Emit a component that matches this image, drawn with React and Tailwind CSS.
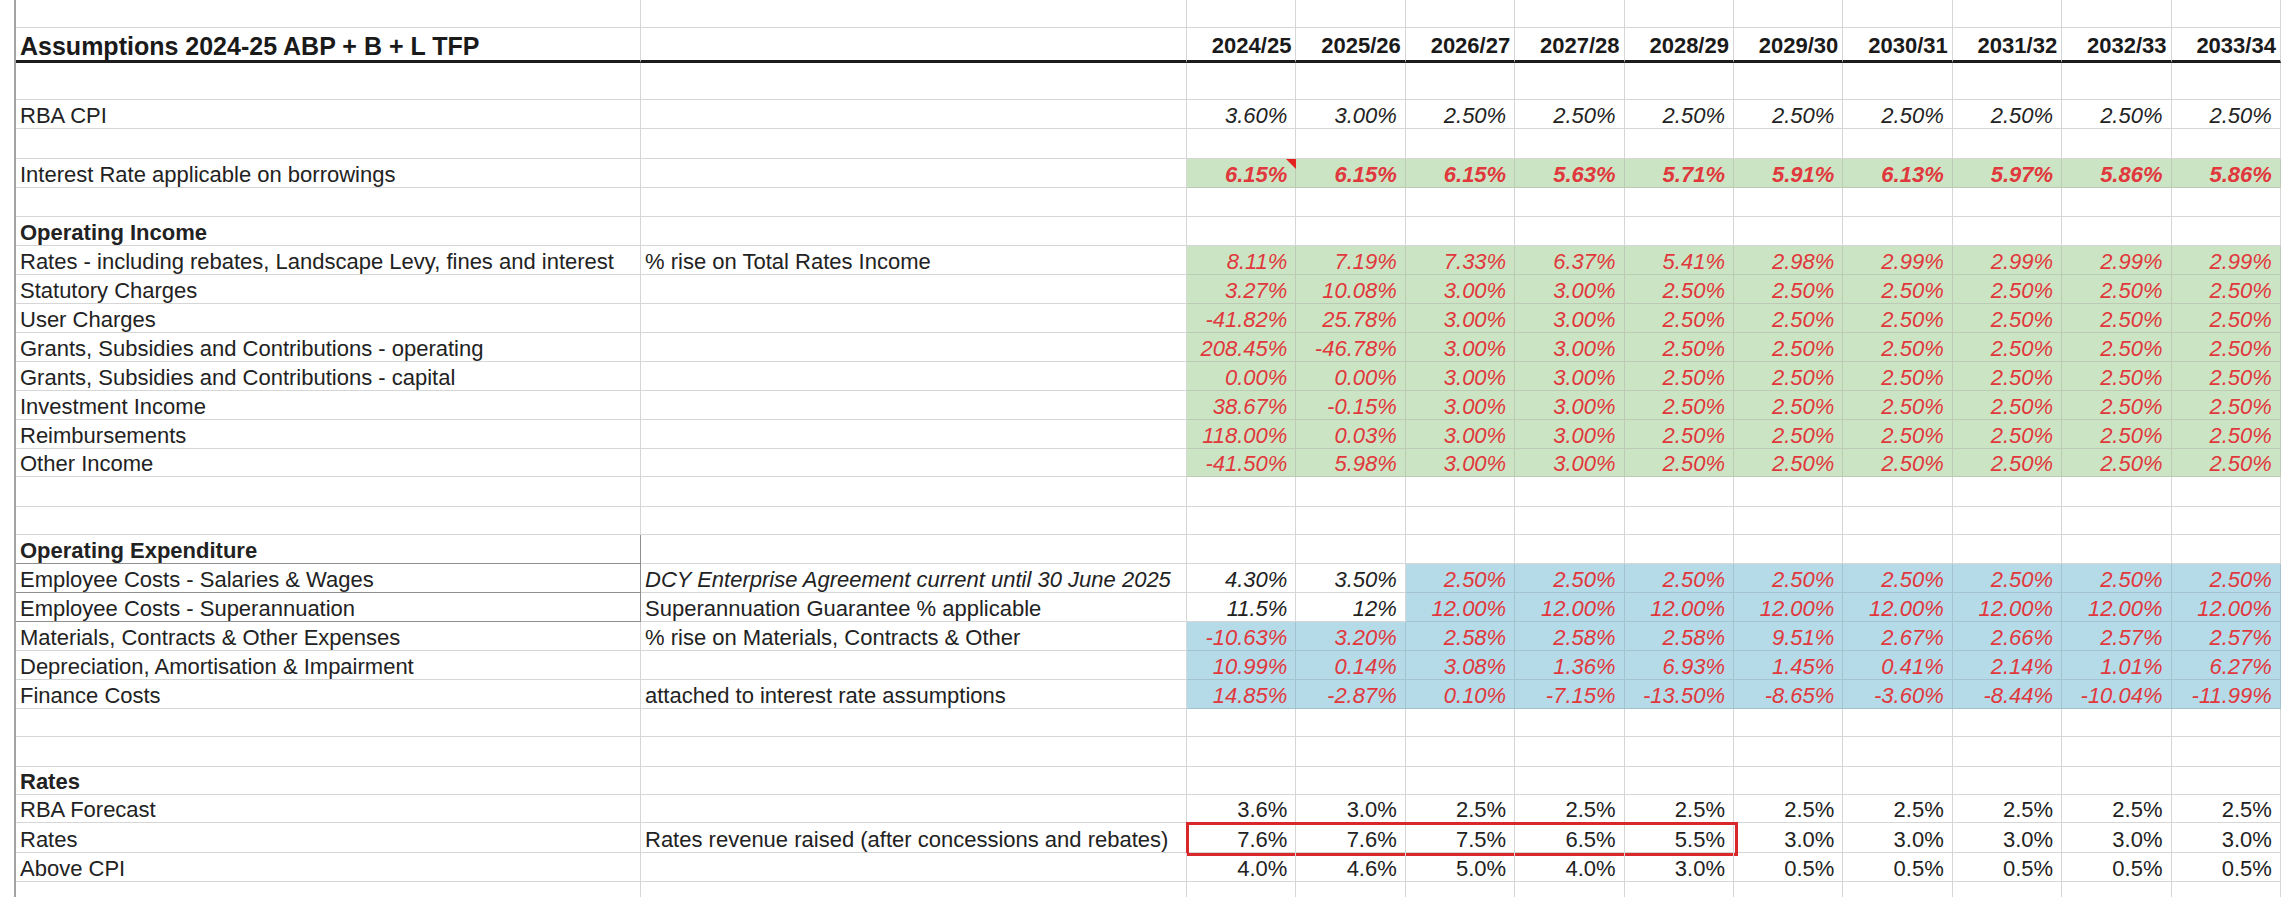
import React from 'react';

const YEARS = ['2024/25', '2025/26', '2026/27', '2027/28', '2028/29', '2029/30', '2030/31', '2031/32', '2032/33', '2033/34'];

const GRID = 'relative grid grid-cols-[16px_625px_546px_repeat(10,109.4px)] w-[2281px]';

const FILL = {
  g: 'bg-[#cbe5c4] border-[#bccab6]',
  b: 'bg-[#b5dbe8] border-[#a3c4cf]',
  w: 'border-[#d6d6d6]',
};

const TEXT = {
  red: 'text-[#e0383c] italic',
  redb: 'text-[#e0383c] italic font-bold',
  dark: 'text-[#222] italic',
  plain: 'text-[#222] pr-[5px]',
};

const mk = (vals, f, t) => vals.map((v) => ({ v, f, t }));

function Row({ h, a, b, aCls = '', bCls = '', cells, aLine = 'border-[#d6d6d6]', noBottom, children }) {
  const bb = noBottom ? '' : 'border-b';
  return (
    <div className={`${GRID} ${h}`}>
      <div className="border-r-2 border-[#a3a3a3]" />
      <div className={`flex items-end pl-[4px] pb-[1px] whitespace-nowrap border-r ${bb} ${aLine} ${aCls}`}>{a}</div>
      <div className={`flex items-end pl-[4px] pb-[1px] whitespace-nowrap border-r ${bb} border-[#d6d6d6] ${bCls}`}>{b}</div>
      {YEARS.map((y, i) => {
        const c = cells ? cells[i] : null;
        const f = c ? FILL[c.f] : FILL.w;
        const t = c ? TEXT[c.t] : '';
        return (
          <div key={y} className={`flex items-end justify-end pr-[8px] pb-[1px] whitespace-nowrap border-r ${bb} ${f} ${t}`}>
            {c ? c.v : ''}
          </div>
        );
      })}
      {children}
    </div>
  );
}

const income = [
  ['Rates - including rebates, Landscape Levy, fines and interest', '% rise on Total Rates Income', ['8.11%', '7.19%', '7.33%', '6.37%', '5.41%', '2.98%', '2.99%', '2.99%', '2.99%', '2.99%'], 'h-[29px]'],
  ['Statutory Charges', '', ['3.27%', '10.08%', '3.00%', '3.00%', '2.50%', '2.50%', '2.50%', '2.50%', '2.50%', '2.50%'], 'h-[29px]'],
  ['User Charges', '', ['-41.82%', '25.78%', '3.00%', '3.00%', '2.50%', '2.50%', '2.50%', '2.50%', '2.50%', '2.50%'], 'h-[29px]'],
  ['Grants, Subsidies and Contributions - operating', '', ['208.45%', '-46.78%', '3.00%', '3.00%', '2.50%', '2.50%', '2.50%', '2.50%', '2.50%', '2.50%'], 'h-[29px]'],
  ['Grants, Subsidies and Contributions - capital', '', ['0.00%', '0.00%', '3.00%', '3.00%', '2.50%', '2.50%', '2.50%', '2.50%', '2.50%', '2.50%'], 'h-[29px]'],
  ['Investment Income', '', ['38.67%', '-0.15%', '3.00%', '3.00%', '2.50%', '2.50%', '2.50%', '2.50%', '2.50%', '2.50%'], 'h-[29px]'],
  ['Reimbursements', '', ['118.00%', '0.03%', '3.00%', '3.00%', '2.50%', '2.50%', '2.50%', '2.50%', '2.50%', '2.50%'], 'h-[29px]'],
  ['Other Income', '', ['-41.50%', '5.98%', '3.00%', '3.00%', '2.50%', '2.50%', '2.50%', '2.50%', '2.50%', '2.50%'], 'h-[28px]'],
];

const salaries = [
  { v: '4.30%', f: 'w', t: 'dark' },
  { v: '3.50%', f: 'w', t: 'dark' },
  ...mk(Array(8).fill('2.50%'), 'b', 'red'),
];

const superann = [
  { v: '11.5%', f: 'w', t: 'dark' },
  { v: '12%', f: 'w', t: 'dark' },
  ...mk(Array(8).fill('12.00%'), 'b', 'red'),
];

const DARKLINE = 'border-[#8f8f8f]';

export default function App() {
  return (
    <div className="w-[2294px] h-[909px] overflow-hidden bg-white font-['Liberation_Sans',Arial,sans-serif] text-[22px] leading-[22px] text-[#222]">
      <Row h="h-[28px]" />

      {/* title row */}
      <div className={`${GRID} h-[35px]`}>
        <div className="border-r-2 border-[#a3a3a3]" />
        <div className="flex items-end pl-[4px] pb-[3px] whitespace-nowrap border-r border-r-[#d6d6d6] border-b-[3px] border-b-[#1c1c1c] text-[25px] font-bold text-[#1a1a1a]">
          Assumptions 2024-25 ABP + B + L TFP
        </div>
        <div className="border-r border-r-[#d6d6d6] border-b-[3px] border-b-[#1c1c1c]" />
        {YEARS.map((y) => (
          <div key={y} className="flex items-end justify-end pr-[4px] pb-[3px] border-r border-r-[#d6d6d6] border-b-[3px] border-b-[#1c1c1c] font-bold text-[#1a1a1a]">
            {y}
          </div>
        ))}
      </div>

      <Row h="h-[37px]" />
      <Row h="h-[29px]" a="RBA CPI" cells={mk(['3.60%', '3.00%', '2.50%', '2.50%', '2.50%', '2.50%', '2.50%', '2.50%', '2.50%', '2.50%'], 'w', 'dark')} />
      <Row h="h-[30px]" />
      <Row
        h="h-[29px]"
        a="Interest Rate applicable on borrowings"
        cells={mk(['6.15%', '6.15%', '6.15%', '5.63%', '5.71%', '5.91%', '6.13%', '5.97%', '5.86%', '5.86%'], 'g', 'redb')}
      >
        {/* comment marker */}
        <div className="absolute left-[1286px] top-0 w-0 h-0 border-t-[10px] border-l-[10px] border-t-[#e3211f] border-l-transparent" />
      </Row>
      <Row h="h-[29px]" />

      <Row h="h-[29px]" a="Operating Income" aCls="font-bold" />
      {income.map(([a, b, vals, h]) => (
        <Row key={a} h={h} a={a} b={b} cells={mk(vals, 'g', 'red')} />
      ))}

      <Row h="h-[30px]" />
      <Row h="h-[28px]" />

      <Row h="h-[29px]" a="Operating Expenditure" aCls="font-bold" aLine={DARKLINE} />
      <Row h="h-[29px]" a="Employee Costs - Salaries & Wages" b="DCY Enterprise Agreement current until 30 June 2025" bCls="italic" aLine={DARKLINE} cells={salaries} />
      <Row h="h-[29px]" a="Employee Costs - Superannuation" b="Superannuation Guarantee % applicable" aLine={DARKLINE} cells={superann} />
      <Row
        h="h-[29px]"
        a="Materials, Contracts & Other Expenses"
        b="% rise on Materials, Contracts & Other"
        cells={mk(['-10.63%', '3.20%', '2.58%', '2.58%', '2.58%', '9.51%', '2.67%', '2.66%', '2.57%', '2.57%'], 'b', 'red')}
      />
      <Row
        h="h-[29px]"
        a="Depreciation, Amortisation & Impairment"
        cells={mk(['10.99%', '0.14%', '3.08%', '1.36%', '6.93%', '1.45%', '0.41%', '2.14%', '1.01%', '6.27%'], 'b', 'red')}
      />
      <Row
        h="h-[29px]"
        a="Finance Costs"
        b="attached to interest rate assumptions"
        cells={mk(['14.85%', '-2.87%', '0.10%', '-7.15%', '-13.50%', '-8.65%', '-3.60%', '-8.44%', '-10.04%', '-11.99%'], 'b', 'red')}
      />

      <Row h="h-[28px]" />
      <Row h="h-[30px]" />

      <Row h="h-[28px]" a="Rates" aCls="font-bold" />
      <Row h="h-[28px]" a="RBA Forecast" cells={mk(['3.6%', '3.0%', '2.5%', '2.5%', '2.5%', '2.5%', '2.5%', '2.5%', '2.5%', '2.5%'], 'w', 'plain')} />
      <Row
        h="h-[30px]"
        a="Rates"
        b="Rates revenue raised (after concessions and rebates)"
        cells={mk(['7.6%', '7.6%', '7.5%', '6.5%', '5.5%', '3.0%', '3.0%', '3.0%', '3.0%', '3.0%'], 'w', 'plain')}
      >
        {/* highlight box */}
        <div className="absolute left-[1186px] top-[-1px] w-[552px] h-[34px] border-[3px] border-[#d9282c]" />
      </Row>
      <Row h="h-[29px]" a="Above CPI" cells={mk(['4.0%', '4.6%', '5.0%', '4.0%', '3.0%', '0.5%', '0.5%', '0.5%', '0.5%', '0.5%'], 'w', 'plain')} />
      <Row h="h-[15px]" noBottom />
    </div>
  );
}
